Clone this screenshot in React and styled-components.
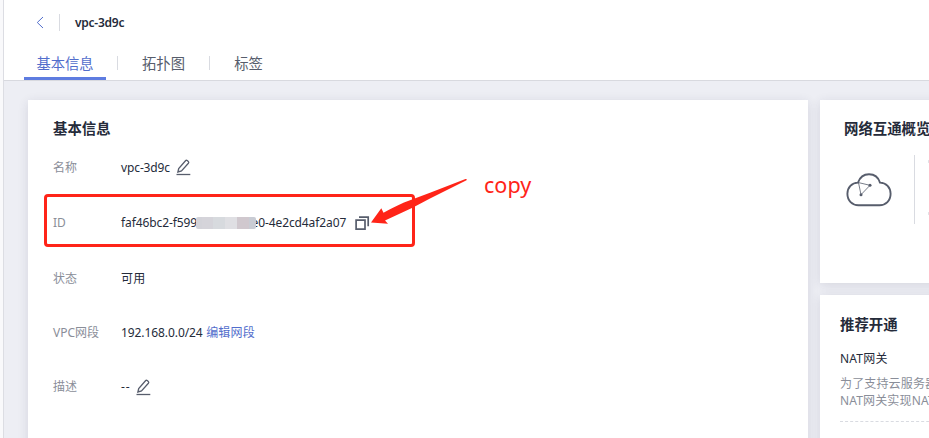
import React from "react";
import styled, { createGlobalStyle } from "styled-components";

const Global = createGlobalStyle`
  * { box-sizing: border-box; }
  body { margin: 0; overflow: hidden; font-family: "Noto Sans", "Noto Sans CJK SC", sans-serif; font-size: 12px; color: #252b3a; background: #fff; }
`;
const Page = styled.div`
  position: relative; width: 929px; height: 438px; overflow: hidden;
  padding-left: 3px; background: #f9f9fb;
`;
const Shell = styled.div`
  height: 438px; border-left: 1px solid #dcdde3; background: #edeef4;
  display: flex; flex-direction: column;
`;
const Header = styled.header`
  height: 81px; flex: none; background: #fff; border-bottom: 1px solid #d8d9df;
  display: flex; flex-direction: column; justify-content: space-between;
`;
const Crumb = styled.div`
  height: 45px; display: flex; align-items: center; padding-left: 32px;
`;
const Rule = styled.i`
  width: 1px; height: ${(p) => p.$h}px; background: #d9dbe1; flex: none;
`;
const Title = styled.h1`
  margin: 0 0 0 15px; font-size: 12px; line-height: 18px; font-weight: 600; letter-spacing: -0.25px;
`;
const Tabs = styled.nav`
  height: 35px; display: flex; align-items: center; padding-left: 20px;
`;
const Tab = styled.a`
  height: 35px; width: ${(p) => p.$w}px; text-align: center; font-size: 14.3px; line-height: 37px; white-space: nowrap;
  color: ${(p) => (p.$active ? "#526ecc" : "#575d6c")};
  border-bottom: 3px solid ${(p) => (p.$active ? "#5e7ce0" : "transparent")};
`;
const TabRule = styled(Rule)`margin: 0 ${(p) => p.$r}px 0 ${(p) => p.$l}px;`;
const Content = styled.main`
  flex: 1; display: flex; gap: 12px; padding: 19px 0 0 24px; min-height: 0;
`;
const Card = styled.section`
  background: #fff; box-shadow: 0 2px 10px rgba(40, 45, 70, 0.12); flex: none;
  width: ${(p) => p.$w}px; height: ${(p) => p.$h}px; padding: ${(p) => p.$pad}; overflow: hidden;
`;
const Side = styled.aside`display: flex; flex-direction: column; gap: 12px; width: 180px; flex: none;`;
const Heading = styled.h2`
  margin: 0; padding-bottom: 1px; font-size: 14.4px; line-height: 20px; font-weight: 700; white-space: nowrap;
`;
const Row = styled.div`
  display: flex; align-items: center; height: ${(p) => p.$h}px; padding-bottom: ${(p) => p.$lift || 0}px;
  white-space: nowrap; line-height: 18px;
`;
const Label = styled.span`width: 68px; flex: none; color: #8a8e99;`;
const Value = styled.span`display: flex; align-items: center; letter-spacing: ${(p) => p.$track || 0};`;
const Link = styled.a`color: #526ecc; margin-left: 3.5px; letter-spacing: 0.2px;`;
const Mosaic = styled.span`
  display: flex; width: 60px; height: 12px; margin: 0 -4px 0 -1.5px; position: relative; border-radius: 2px; overflow: hidden;
`;
const Cell = styled.i`width: ${(p) => p.$w}px; background: ${(p) => p.$c};`;
const IconBox = styled.svg`flex: none; display: block; margin: ${(p) => p.$m || 0};`;
const Overview = styled.div`display: flex; align-items: flex-start; padding-top: 15px;`;
const Legend = styled.div`
  display: flex; flex-direction: column; justify-content: space-between; height: 61px; margin-left: 13px;
`;
const Dot = styled.i`width: 5px; height: 5px; border-radius: 50%; border: 1px solid #d5d7dd; margin-top: ${(p) => p.$t || 0}px;`;
const Product = styled.h3`margin: 14px 0 7px; font-size: 12px; line-height: 18px; font-weight: 400; letter-spacing: 0.2px;`;
const Copy = styled.p`
  margin: 0; padding-bottom: 12px; color: #8a8e99; line-height: 17px; white-space: nowrap; border-bottom: 1px dashed #d9dbe1;
  letter-spacing: 0.15px;
`;
const Highlight = styled.div`
  position: absolute; left: 44px; top: 194px; width: 371px; height: 53px; border: 3px solid #ff2418; border-radius: 4px;
`;
const Arrow = styled.svg`position: absolute; left: 368px; top: 174px;`;
const Note = styled.span`
  position: absolute; left: 484px; top: 171px; font-size: 21.6px; line-height: 28px; color: #ff2418;
`;

const Pencil = ({ m }) => (
  <IconBox $m={m} width="15" height="17" viewBox="0 0 15 17" fill="none" stroke="#575d6c" strokeWidth="1.3">
    <path d="M1.9 13L2.7 9.5L9.5 1.7Q10.3 0.9 11.2 1.6L12.3 2.5Q13.2 3.3 12.4 4.2L5.5 12Z" />
    <path d="M0.5 15.5H14.3" />
  </IconBox>
);
const Duplicate = () => (
  <IconBox $m="0 0 0 9px" width="15" height="15" viewBox="0 0 15 15" fill="none" stroke="#575d6c" strokeWidth="1.7">
    <path d="M1.1 4.1H10V13.2H1.1Z" />
    <path d="M4 1.2H13.2V10.2" />
  </IconBox>
);
const Cloud = () => (
  <IconBox $m="18px 22px 0 2px" width="46" height="34" viewBox="0 0 46 34" fill="none" stroke="#575d6c" strokeWidth="1.9">
    <path d="M12 9.6C14 3.8 18 1.2 23 1.2C28.5 1.2 32.4 4.4 34 9.6C40.2 9.8 44.6 14.6 44.6 20.8C44.6 27.6 39.8 32.2 33.5 32.2H12.5C6.2 32.2 1.4 27.6 1.4 20.8C1.4 14.6 5.8 9.8 12 9.6Z" />
    <path d="M12.5 9.6L24 12.3L15 21.7Z" strokeWidth="0.8" />
    <circle cx="24" cy="12.3" r="1.5" fill="#575d6c" stroke="none" />
    <circle cx="15" cy="21.7" r="1.5" fill="#575d6c" stroke="none" />
  </IconBox>
);

const cells = [[6, "#d3d3d9"], [11, "#d5d4da"], [12, "#d7dade"], [12, "#dfdfe3"], [12, "#d0c8ce"], [7, "#c9ccd4"]];

export default function App() {
  return (
    <>
      <Global />
      <Page>
        <Shell>
          <Header>
            <Crumb>
              <IconBox $m="0 15px 0 0" width="8" height="13" viewBox="0 0 8 13" fill="none" stroke="#526ecc" strokeWidth="1">
                <path d="M7 1L1.3 6.5L7 12" />
              </IconBox>
              <Rule $h={17} />
              <Title>vpc-3d9c</Title>
            </Crumb>
            <Tabs>
              <Tab $active $w={82}>基本信息</Tab>
              <TabRule $h={14} $l={11} $r={12} />
              <Tab $w={67}>拓扑图</Tab>
              <TabRule $h={14} $l={12} $r={12} />
              <Tab $w={53}>标签</Tab>
            </Tabs>
          </Header>
          <Content>
            <Card $w={780} $h={360} $pad="19px 25px">
              <Heading>基本信息</Heading>
              <Row $h={56}><Label>名称</Label><Value $track="-0.12px">vpc-3d9c<Pencil m="-2px 0 0 6px" /></Value></Row>
              <Row $h={56} $lift={2}>
                <Label>ID</Label>
                <Value $track="-0.1px">
                  <span>faf46bc2-f599</span>
                  <Mosaic>{cells.map(([w, c], i) => <Cell key={i} $w={w} $c={c} />)}</Mosaic>
                  <span>e0-4e2cd4af2a07</span>
                  <Duplicate />
                </Value>
              </Row>
              <Row $h={54}><Label>状态</Label><Value $track="0.2px">可用</Value></Row>
              <Row $h={54}><Label>VPC网段</Label><Value $track="-0.08px">192.168.0.0/24<Link>编辑网段</Link></Value></Row>
              <Row $h={54}><Label>描述</Label><Value $track="0.8px">--<Pencil m="0 0 0 6px" /></Value></Row>
            </Card>
            <Side>
              <Card $w={180} $h={183} $pad="19px 0 0 24px">
                <Heading>网络互通概览</Heading>
                <Overview>
                  <Cloud />
                  <Rule $h={69} />
                  <Legend><Dot $t={4} /><Dot /></Legend>
                </Overview>
              </Card>
              <Card $w={180} $h={160} $pad="20px 20px">
                <Heading>推荐开通</Heading>
                <Product>NAT网关</Product>
                <Copy>为了支持云服务器<br />NAT网关实现NAT</Copy>
              </Card>
            </Side>
          </Content>
        </Shell>
        <Highlight />
        <Arrow width="104" height="54" viewBox="0 0 104 54" fill="#ff2418">
          <path d="M3 48.5L13.3 34.3L15.5 38.7Q24 34 36 28.5L62 18.7L97.5 5Q99.5 4.8 98.5 6.2L62 24.5L45 33.5L17 46.5L20 49.7Z" />
        </Arrow>
        <Note>copy</Note>
      </Page>
    </>
  );
}
